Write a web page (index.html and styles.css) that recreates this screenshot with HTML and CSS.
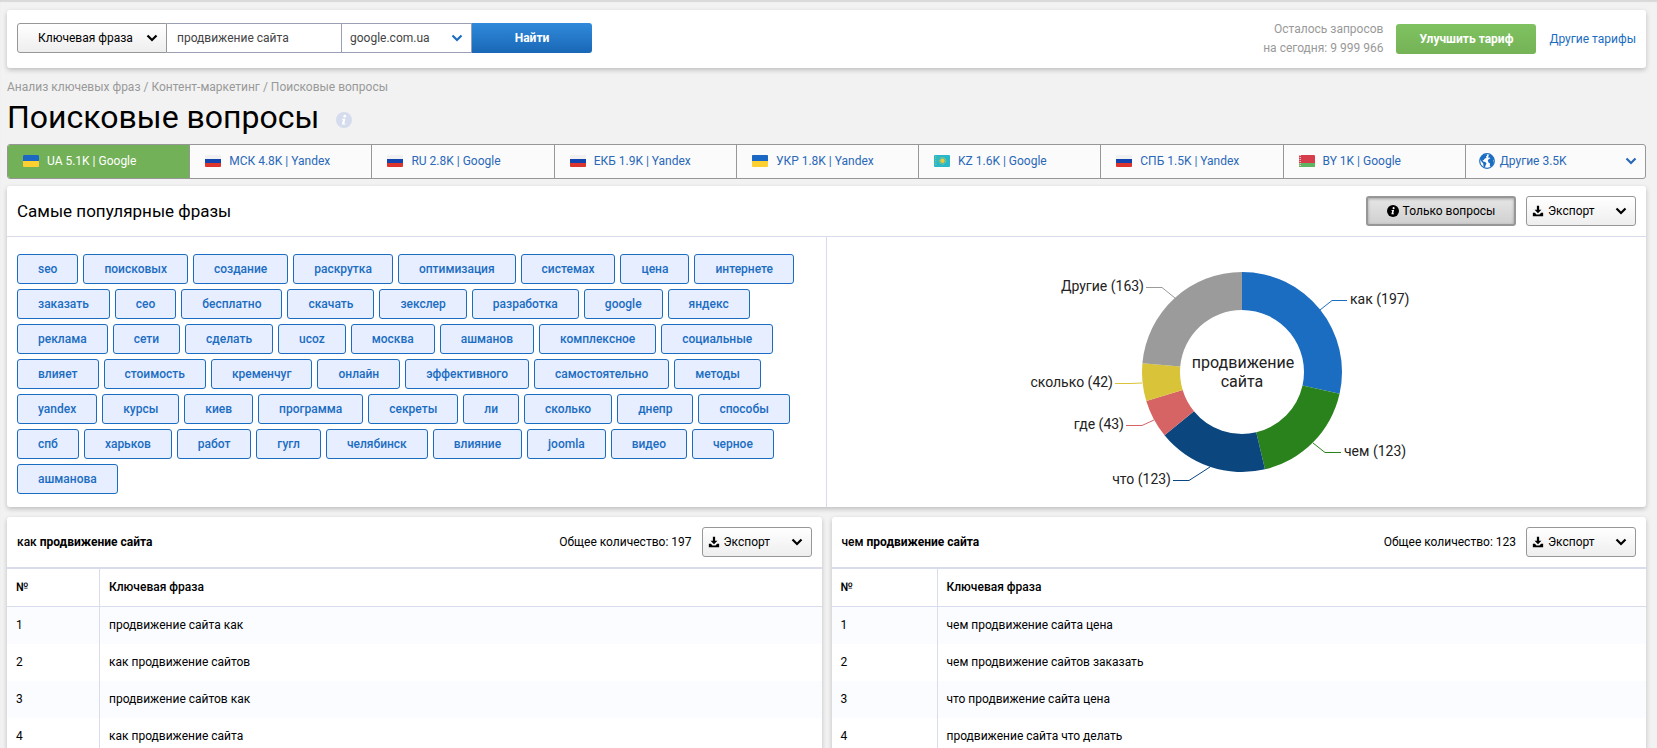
FILE: index.html
```html
<!DOCTYPE html>
<html lang="ru">
<head>
<meta charset="utf-8">
<meta name="viewport" content="width=device-width, initial-scale=1">
<title>Поисковые вопросы</title>
<link rel="stylesheet" href="styles.css">
</head>
<body>
<svg class="sprite" aria-hidden="true">
  <symbol id="chevron" viewBox="0 0 12 8"><path d="M1.5 1.5 6 6l4.500-4.500" fill="none" stroke="currentColor" stroke-width="2.200"/></symbol>
  <symbol id="download" viewBox="0 0 14 14"><path d="M5.700 1h2.600v4.500H11L7 9.500 3 5.500h2.700z" fill="currentColor"/><path d="M1 9h2.400l1.800 2.200h3.600L10.600 9H13v4H1z" fill="currentColor"/></symbol>
  <symbol id="info" viewBox="0 0 16 16"><circle cx="8" cy="8" r="8" fill="currentColor"/><circle cx="8.800" cy="4.200" r="1.400" fill="#fff"/><path d="M6 6.700h3.400l-1.100 4.700h1.100v1H5.800l1.200-4.700H6z" fill="#fff"/></symbol>
  <symbol id="globe" viewBox="0 0 16 16"><circle cx="8" cy="8" r="7.300" fill="#fff" stroke="#1b6dc1" stroke-width="1.200"/><path d="M1.200 6.500 2.500 3.500 5 1.500 7.500 1 8.200 2.500 7 3.500 7.500 4.800 5.500 5.800 4.800 7.300 3.500 6.800 4.200 8.500 6.200 9 7.500 10.500 6.500 12.500 6 14.800 4.500 13.500 4.200 10.500 2.200 8.300z" fill="#1b6dc1"/><path d="M9.500 2.500 11 1.500 13.500 3.500 15 6.500 14 7.500 15 9.500 13.500 12.500 12 13.800 10.800 13 11 10.500 9.500 9.500 8.800 7.500 10 5.800 11.500 5.500 10.500 4.500 9.200 4.800z" fill="#1b6dc1"/></symbol>
  <symbol id="flag-ua" viewBox="0 0 16 12"><rect width="16" height="12" rx="1" fill="#fdd031"/><path d="M0 6V1q0-1 1-1h14q1 0 1 1v5z" fill="#1b68c4"/></symbol>
  <symbol id="flag-ru" viewBox="0 0 16 12"><rect width="16" height="12" rx="1" fill="#f1f1f1"/><path d="M0 4h16v4H0z" fill="#1343ad"/><path d="M0 8h16v3q0 1-1 1H1q-1 0-1-1z" fill="#dc352d"/></symbol>
  <symbol id="flag-kz" viewBox="0 0 16 12"><rect width="16" height="12" rx="1" fill="#29b8ca"/><circle cx="8.500" cy="5.800" r="3.300" fill="none" stroke="#c5c957" stroke-dasharray="1 .7"/><circle cx="8.500" cy="5.800" r="2.200" fill="#f0c93b"/><path d="M1.800 1v10" stroke="#a6c967" stroke-dasharray="1 1"/></symbol>
  <symbol id="flag-by" viewBox="0 0 16 12"><rect width="16" height="12" rx="1" fill="#d63e4b"/><path d="M0 8h16v3q0 1-1 1H1q-1 0-1-1z" fill="#5fb562"/><path d="M1.200 0v12" stroke="#f3c5c9" stroke-width="1.500" stroke-dasharray="1 1"/></symbol>
</svg>

<main class="page">
  <header class="card topbar">
    <form class="search" onsubmit="return false">
      <div class="select-box select-box--kind">
        <select class="select select--kind" aria-label="Тип поиска"><option>Ключевая фраза</option></select>
        <svg class="chevron"><use href="#chevron"/></svg>
      </div>
      <input class="query" type="text" value="продвижение сайта" aria-label="Запрос">
      <div class="select-box select-box--engine">
        <select class="select select--engine" aria-label="Поисковая система"><option>google.com.ua</option></select>
        <svg class="chevron"><use href="#chevron"/></svg>
      </div>
      <button class="btn-find" type="submit">Найти</button>
    </form>
    <div class="plan">
      <p class="quota">Осталось запросов<br>на сегодня: 9 999 966</p>
      <button class="btn-upgrade" type="button">Улучшить тариф</button>
      <a class="link" href="#">Другие тарифы</a>
    </div>
  </header>

  <nav class="crumbs" aria-label="Путь"><a href="#">Анализ ключевых фраз</a> / <a href="#">Контент-маркетинг</a> / Поисковые вопросы</nav>
  <div class="heading"><h1 class="title">Поисковые вопросы</h1><svg class="heading-info"><use href="#info"/></svg></div>

  <nav class="tabs" aria-label="Регионы">
    <a class="tab tab--active" href="#"><svg class="flag"><use href="#flag-ua"/></svg>UA 5.1K | Google</a>
    <a class="tab" href="#"><svg class="flag"><use href="#flag-ru"/></svg>МСК 4.8K | Yandex</a>
    <a class="tab" href="#"><svg class="flag"><use href="#flag-ru"/></svg>RU 2.8K | Google</a>
    <a class="tab" href="#"><svg class="flag"><use href="#flag-ru"/></svg>ЕКБ 1.9K | Yandex</a>
    <a class="tab" href="#"><svg class="flag"><use href="#flag-ua"/></svg>УКР 1.8K | Yandex</a>
    <a class="tab" href="#"><svg class="flag"><use href="#flag-kz"/></svg>KZ 1.6K | Google</a>
    <a class="tab" href="#"><svg class="flag"><use href="#flag-ru"/></svg>СПБ 1.5K | Yandex</a>
    <a class="tab" href="#"><svg class="flag"><use href="#flag-by"/></svg>BY 1K | Google</a>
    <button class="tab tab--more" type="button"><svg class="globe"><use href="#globe"/></svg>Другие 3.5K<svg class="chevron chevron--end"><use href="#chevron"/></svg></button>
  </nav>

  <section class="card popular">
    <div class="card-head">
      <h2 class="subtitle">Самые популярные фразы</h2>
      <button class="btn btn--pressed" type="button" aria-pressed="true"><svg class="icon"><use href="#info"/></svg>Только вопросы</button>
      <button class="btn btn--export" type="button"><svg class="icon"><use href="#download"/></svg>Экспорт<svg class="chevron chevron--end"><use href="#chevron"/></svg></button>
    </div>
    <div class="popular-body">
      <div class="tags">
        <button class="tag">seo</button><button class="tag">поисковых</button><button class="tag">создание</button><button class="tag">раскрутка</button><button class="tag">оптимизация</button><button class="tag">системах</button><button class="tag">цена</button><button class="tag">интернете</button>
        <button class="tag">заказать</button><button class="tag">сео</button><button class="tag">бесплатно</button><button class="tag">скачать</button><button class="tag">зекслер</button><button class="tag">разработка</button><button class="tag">google</button><button class="tag">яндекс</button>
        <button class="tag">реклама</button><button class="tag">сети</button><button class="tag">сделать</button><button class="tag">ucoz</button><button class="tag">москва</button><button class="tag">ашманов</button><button class="tag">комплексное</button><button class="tag">социальные</button>
        <button class="tag">влияет</button><button class="tag">стоимость</button><button class="tag">кременчуг</button><button class="tag">онлайн</button><button class="tag">эффективного</button><button class="tag">самостоятельно</button><button class="tag">методы</button>
        <button class="tag">yandex</button><button class="tag">курсы</button><button class="tag">киев</button><button class="tag">программа</button><button class="tag">секреты</button><button class="tag">ли</button><button class="tag">сколько</button><button class="tag">днепр</button><button class="tag">способы</button>
        <button class="tag">спб</button><button class="tag">харьков</button><button class="tag">работ</button><button class="tag">гугл</button><button class="tag">челябинск</button><button class="tag">влияние</button><button class="tag">joomla</button><button class="tag">видео</button><button class="tag">черное</button>
        <button class="tag">ашманова</button>
      </div>
      <div class="chart-pane">
        <svg class="chart" viewBox="-220 -125 440 250" role="img" aria-label="Распределение вопросов">
          <path fill="#1b6dc1" d="M0-100A100 100 0 0 1 97.580 21.870L60.500 13.560A62 62 0 0 0 0-62z"/>
          <path fill="#2a821c" d="M97.580 21.870A100 100 0 0 1 22.980 97.320L14.250 60.340A62 62 0 0 0 60.500 13.560z"/>
          <path fill="#0b467f" d="M22.980 97.320A100 100 0 0 1-77.490 63.210L-48.040 39.190A62 62 0 0 0 14.250 60.340z"/>
          <path fill="#d66464" d="M-77.490 63.210A100 100 0 0 1-95.730 28.900L-59.350 17.920A62 62 0 0 0-48.040 39.190z"/>
          <path fill="#d9c338" d="M-95.730 28.900A100 100 0 0 1-99.610-8.850L-61.760-5.490A62 62 0 0 0-59.350 17.920z"/>
          <path fill="#9b9b9b" d="M-99.610-8.850A100 100 0 0 1 0-100V-62A62 62 0 0 0-61.760-5.490z"/>
          <g fill="none">
            <path stroke="#1b6dc1" d="M78-62 90-71.500H105"/>
            <path stroke="#2a821c" d="M71 71 83 80.500H99"/>
            <path stroke="#0b467f" d="M-32 95-53 108.500H-69"/>
            <path stroke="#d66464" d="M-88 48-100 53.500H-116"/>
            <path stroke="#d9c338" d="M-100 11-112 11.500H-127"/>
            <path stroke="#9b9b9b" d="M-67-74-80-84.500H-96"/>
          </g>
          <g class="chart-label">
            <text x="108" y="-68">как (197)</text>
            <text x="102" y="84">чем (123)</text>
            <text x="-71" y="112" text-anchor="end">что (123)</text>
            <text x="-118" y="57" text-anchor="end">где (43)</text>
            <text x="-129" y="15" text-anchor="end">сколько (42)</text>
            <text x="-98" y="-81" text-anchor="end">Другие (163)</text>
          </g>
          <g class="chart-center" text-anchor="middle">
            <text x="1" y="-4">продвижение</text>
            <text x="0" y="15">сайта</text>
          </g>
        </svg>
      </div>
    </div>
  </section>

  <div class="groups">
    <section class="card">
      <div class="card-head card-head--table">
        <h3 class="group-title"><span class="group-word">как</span> продвижение сайта</h3>
        <span class="total">Общее количество: 197</span>
        <button class="btn btn--export" type="button"><svg class="icon"><use href="#download"/></svg>Экспорт<svg class="chevron chevron--end"><use href="#chevron"/></svg></button>
      </div>
      <table class="phrases">
        <thead><tr><th class="num">№</th><th>Ключевая фраза</th></tr></thead>
        <tbody>
          <tr><td>1</td><td>продвижение сайта как</td></tr>
          <tr><td>2</td><td>как продвижение сайтов</td></tr>
          <tr><td>3</td><td>продвижение сайтов как</td></tr>
          <tr><td>4</td><td>как продвижение сайта</td></tr>
        </tbody>
      </table>
    </section>
    <section class="card">
      <div class="card-head card-head--table">
        <h3 class="group-title"><span class="group-word">чем</span> продвижение сайта</h3>
        <span class="total">Общее количество: 123</span>
        <button class="btn btn--export" type="button"><svg class="icon"><use href="#download"/></svg>Экспорт<svg class="chevron chevron--end"><use href="#chevron"/></svg></button>
      </div>
      <table class="phrases">
        <thead><tr><th class="num num--wide">№</th><th>Ключевая фраза</th></tr></thead>
        <tbody>
          <tr><td>1</td><td>чем продвижение сайта цена</td></tr>
          <tr><td>2</td><td>чем продвижение сайтов заказать</td></tr>
          <tr><td>3</td><td>что продвижение сайта цена</td></tr>
          <tr><td>4</td><td>продвижение сайта что делать</td></tr>
        </tbody>
      </table>
    </section>
  </div>
</main>
</body>
</html>
```
FILE: styles.css
```css
* { box-sizing: border-box; }
body {
  margin: 0;
  height: 100vh;
  overflow: hidden;
  background: #f2f2f2;
  box-shadow: inset 0 2px 1px #d9d9d9;
  color: #000;
  font: 12px/18px Roboto, "Liberation Sans", sans-serif;
}
button, input, select { font: inherit; color: inherit; margin: 0; }
button { cursor: pointer; }
h1, h2, h3, p { margin: 0; }
a { color: inherit; text-decoration: none; }
.sprite { position: absolute; width: 0; height: 0; }
.page { padding: 10px 11px 0 7px; }
.card {
  background: #fff;
  border-radius: 3px;
  box-shadow: 0 2px 5px rgba(0, 0, 0, .22);
}
.chevron { width: 12px; height: 8px; flex: none; }
.chevron--end { margin-left: auto; }

/* top bar */
.topbar {
  display: flex;
  justify-content: space-between;
  align-items: center;
  height: 58px;
  padding: 0 10px;
}
.search { display: flex; height: 30px; margin-bottom: 2px; }
.select-box { position: relative; }
.select-box .chevron { position: absolute; right: 9px; top: 11px; pointer-events: none; }
.select-box--kind { width: 150px; }
.select-box--engine { width: 130px; color: #1b6dc1; }
.select {
  appearance: none;
  width: 100%;
  height: 30px;
  border: 1px solid #9b9fb5;
  border-left: 0;
  border-radius: 0;
  background: #fff;
  color: #444;
  padding: 0 24px 0 8px;
}
.select--kind {
  border: 1px solid #979797;
  border-radius: 3px 0 0 3px;
  background: linear-gradient(#fff, #eee);
  color: #000;
  padding-left: 20px;
}
.query {
  width: 175px;
  border: 1px solid #9b9fb5;
  border-left: 0;
  padding: 0 10px;
  color: #444;
}
.btn-find, .btn-upgrade { border: 0; color: #fff; font-weight: 700; }
.btn-find {
  width: 120px;
  border-radius: 0 3px 3px 0;
  background: linear-gradient(#318adb, #1967b6);
}
.plan { display: flex; align-items: center; }
.quota { color: #999; text-align: right; line-height: 19px; margin-right: 13px; }
.btn-upgrade {
  width: 140px;
  height: 30px;
  border-radius: 3px;
  background: linear-gradient(#7fc261, #75b356);
  margin-right: 13px;
}
.link { color: #1b6dc1; }

/* heading */
.crumbs { margin-top: 10px; color: #999; }
.heading { display: flex; align-items: flex-start; gap: 17px; height: 48px; }
.title { font-size: 32px; line-height: 42px; font-weight: 400; }
.heading-info { width: 16px; height: 16px; color: #d5dced; margin-top: 16px; }

/* region tabs */
.tabs {
  display: flex;
  height: 35px;
  border: 1px solid #979797;
  border-radius: 3px;
  background: #fbfbfb;
  overflow: hidden;
}
.tab {
  flex: 1 1 0;
  display: flex;
  align-items: center;
  padding: 0 8px 2px 15px;
  border: 0;
  border-left: 1px solid #979797;
  background: none;
  color: #2a68b8;
}
.tab--active { background: #73b158; color: #fff; border-left: 0; }
.flag { width: 16px; height: 12px; margin: 1px 8px 0 0; }
.tab--more { padding-left: 13px; }
.globe { width: 16px; height: 16px; margin-right: 5px; }

/* popular phrases */
.popular { margin-top: 7px; }
.card-head {
  display: flex;
  align-items: center;
  gap: 10px;
  height: 51px;
  padding: 0 10px;
  border-bottom: 1px solid #d8dcec;
}
.subtitle { flex: 1; font-size: 17px; line-height: 24px; font-weight: 400; }
.btn {
  display: flex;
  align-items: center;
  height: 30px;
  border: 1px solid #979797;
  border-radius: 3px;
  background: linear-gradient(#fff, #eee);
}
.icon { width: 12px; height: 12px; flex: none; margin-right: 4px; }
.btn--export { width: 110px; padding: 0 8px 0 5px; }
.btn--pressed {
  width: 150px;
  justify-content: center;
  border-width: 2px;
  background: linear-gradient(#e6e6e6, #d0d0d0);
  box-shadow: inset 0 1px 3px rgba(0, 0, 0, .3);
}
.popular-body { display: grid; grid-template-columns: 1fr 1fr; }
.tags {
  display: flex;
  flex-wrap: wrap;
  gap: 5px;
  padding: 17px 10px 13px;
  border-right: 1px solid #d8dcec;
}
.tag {
  height: 30px;
  padding: 0 20px;
  border: 1px solid #1b6dc1;
  border-radius: 3px;
  background: #e7eeff;
  color: #1b6dc1;
  font-weight: 500;
}
.chart-pane { display: flex; align-items: center; justify-content: center; padding-left: 12px; }
.chart { width: 440px; height: 250px; }
.chart-label { font-size: 14px; fill: #222; }
.chart-center { font-size: 16px; fill: #222; }

/* question groups */
.groups { display: grid; grid-template-columns: 1fr 1fr; gap: 10px; margin-top: 10px; }
.card-head--table { height: 52px; border-bottom-width: 2px; }
.group-title { flex: 1; font-size: 12px; line-height: 18px; font-weight: 700; }
.group-word { font-weight: 500; }
.phrases { width: 100%; border-collapse: separate; border-spacing: 0; table-layout: fixed; }
.phrases th, .phrases td { height: 37px; padding: 0 9px 2px; text-align: left; }
.phrases th { height: 38px; font-weight: 500; border-bottom: 1px solid #d8dcec; }
.phrases th:first-child, .phrases td:first-child { border-right: 1px solid #d8dcec; }
.phrases tbody tr:nth-child(odd) { background: #fafcff; }
.num { width: 93px; }
.num--wide { width: 106px; }
```
